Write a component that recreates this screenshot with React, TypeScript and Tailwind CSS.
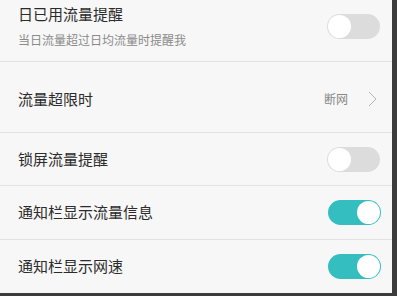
import React from 'react';

const font = { fontFamily: '"Noto Sans CJK SC", "Noto Sans", sans-serif' };

const Toggle: React.FC<{ on?: boolean }> = ({ on }) => (
  <div
    className={`w-[53px] h-[25px] rounded-full p-[1px] flex items-center ${
      on ? 'bg-[#35bec0] justify-end' : 'bg-[#dcdcdc] justify-start'
    }`}
  >
    <div className="w-[23px] h-[23px] rounded-full bg-white" />
  </div>
);

export default function App() {
  return (
    <div className="w-[397px] h-[296px] bg-[#3c3c3c] overflow-hidden" style={font}>
      <div className="w-[392px] h-[293px] bg-[#f7f7f7] flex flex-col">
        {/* row 1 */}
        <div className="h-[62px] border-b border-[#e3e3e3] flex items-start justify-between pl-[18px] pr-[12px]">
          <div className="flex flex-col pt-[3px]">
            <span className="text-[15px] leading-[22px] text-[#2b2b2b]">日已用流量提醒</span>
            <span className="text-[12px] leading-[18px] mt-[6px] text-[#8a8a8a]">当日流量超过日均流量时提醒我</span>
          </div>
          <div className="pt-[14px]">
            <Toggle />
          </div>
        </div>

        {/* row 2 */}
        <div className="h-[71px] border-b border-[#e3e3e3] flex items-center justify-between pl-[18px] pr-[15px]">
          <span className="text-[15px] text-[#2b2b2b] pt-[4px]">流量超限时</span>
          <div className="flex items-center gap-[20px] pt-[4px]">
            <span className="text-[12px] text-[#888]">断网</span>
            <svg width="9" height="16" viewBox="0 0 9 16" fill="none">
              <path d="M1 1l7 7-7 7" stroke="#b5b5b5" strokeWidth="1" />
            </svg>
          </div>
        </div>

        {/* row 3 */}
        <div className="h-[53px] border-b border-[#e3e3e3] flex items-center justify-between pl-[18px] pr-[12px]">
          <span className="text-[15px] text-[#2b2b2b]">锁屏流量提醒</span>
          <Toggle />
        </div>

        {/* row 4 */}
        <div className="h-[54px] border-b border-[#e3e3e3] flex items-center justify-between pl-[18px] pr-[11px]">
          <span className="text-[15px] text-[#2b2b2b]">通知栏显示流量信息</span>
          <Toggle on />
        </div>

        {/* row 5 */}
        <div className="flex-1 flex items-center justify-between pl-[18px] pr-[11px]">
          <span className="text-[15px] text-[#2b2b2b]">通知栏显示网速</span>
          <Toggle on />
        </div>
      </div>
    </div>
  );
}
